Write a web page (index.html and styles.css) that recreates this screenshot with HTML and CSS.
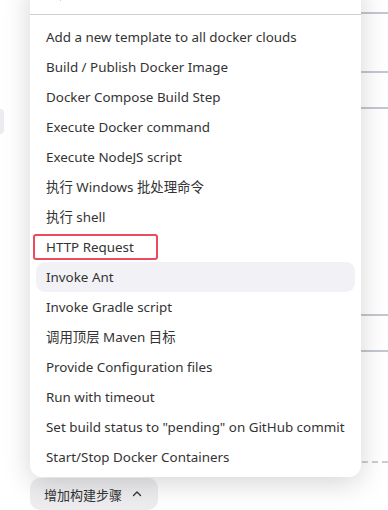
FILE: index.html
```html
<!DOCTYPE html>
<html lang="zh-CN">
<head>
  <meta charset="UTF-8" />
  <meta name="viewport" content="width=device-width, initial-scale=1.0"/>
  <title>增加构建步骤</title>
  <link rel="stylesheet" href="styles.css">
</head>
<body>

  <div class="page">
    <div class="backdrop">
      <div class="line-row row-a"></div>
      <div class="line-row row-b"></div>
      <div class="line-row row-c"></div>
      <div class="line-row row-d"><span class="ghost-input"></span></div>
      <div class="line-row row-e"></div>
      <div class="line-row row-f dashed"></div>
    </div>

    <button class="add-step">
      增加构建步骤
      <svg width="10" height="10" viewBox="0 0 10 10"><path d="M1.5 6.5 L5 3 L8.5 6.5" fill="none" stroke="#333" stroke-width="1.4" stroke-linecap="round" stroke-linejoin="round"/></svg>
    </button>

    <div class="dropdown">
      <div class="dropdown-search">
        <svg class="search-icon" width="12" height="12" viewBox="0 0 12 12"><circle cx="5" cy="5" r="4" fill="none" stroke="#333" stroke-width="1.4"/><path d="M8 8 L10.5 10.5" stroke="#333" stroke-width="1.6" stroke-linecap="round"/></svg>
      </div>
      <ul class="menu">
        <li>Add a new template to all docker clouds</li>
        <li>Build / Publish Docker Image</li>
        <li>Docker Compose Build Step</li>
        <li>Execute Docker command</li>
        <li>Execute NodeJS script</li>
        <li>执行 Windows 批处理命令</li>
        <li>执行 shell</li>
        <li class="marked">HTTP Request<span class="mark-box"></span></li>
        <li class="hover">Invoke Ant</li>
        <li>Invoke Gradle script</li>
        <li>调用顶层 Maven 目标</li>
        <li>Provide Configuration files</li>
        <li>Run with timeout</li>
        <li>Set build status to "pending" on GitHub commit</li>
        <li>Start/Stop Docker Containers</li>
      </ul>
    </div>
  </div>

</body>
</html>
```

FILE: styles.css
```css
* {
  box-sizing: border-box;
  margin: 0;
  padding: 0;
}

body {
  font-family: "Noto Sans", "Noto Sans CJK SC", sans-serif;
  background: #fff;
  color: #333;
  overflow: hidden;
}

.page {
  position: relative;
  width: 388px;
  height: 510px;
  overflow: hidden;
}

/* form rows behind the menu */
.backdrop {
  height: 478px;
  margin-left: 60px;
  display: flex;
  flex-direction: column;
}

.line-row {
  border-bottom: 2px solid #c3c8ce;
  position: relative;
}

.row-a { height: 14px; }
.row-b { height: 59px; }
.row-c { height: 36px; }
.row-d { height: 207px; }
.row-e { height: 36px; }
.row-f { height: 111px; }

.line-row.dashed {
  border-bottom: 2px dashed #c9cdd2;
}

.ghost-input {
  position: absolute;
  left: -60px;
  top: 0;
  width: 4px;
  height: 25px;
  background: #ececf0;
  border-radius: 0 4px 4px 0;
}

.add-step {
  margin-left: 30px;
  height: 32px;
  padding: 0 16px 0 14px;
  border: none;
  border-radius: 10px;
  background: #ededf0;
  font-family: "Noto Sans CJK SC", sans-serif;
  font-size: 13px;
  color: #333;
  display: flex;
  align-items: center;
  gap: 10px;
}

.dropdown {
  position: absolute;
  left: 30px;
  top: -20px;
  width: 331px;
  background: #fff;
  border-radius: 12px;
  box-shadow: 0 6px 28px rgba(0, 0, 0, 0.17);
  padding-bottom: 5px;
}

.dropdown-search {
  height: 35px;
  border-bottom: 1px solid #cdd1d6;
  position: relative;
}

.search-icon {
  position: absolute;
  left: 20px;
  top: 9px;
}

.menu {
  list-style: none;
  padding: 7px 6px 0;
}

.menu li {
  height: 30px;
  line-height: 30px;
  padding-left: 10px;
  font-size: 13.4px;
  border-radius: 9px;
  white-space: nowrap;
  position: relative;
}

.menu li.hover {
  background: #f2f2f6;
}

.mark-box {
  position: absolute;
  left: -3px;
  top: 2px;
  width: 125px;
  height: 26px;
  border: 2px solid #ea4c5c;
  border-radius: 3px;
}
```
